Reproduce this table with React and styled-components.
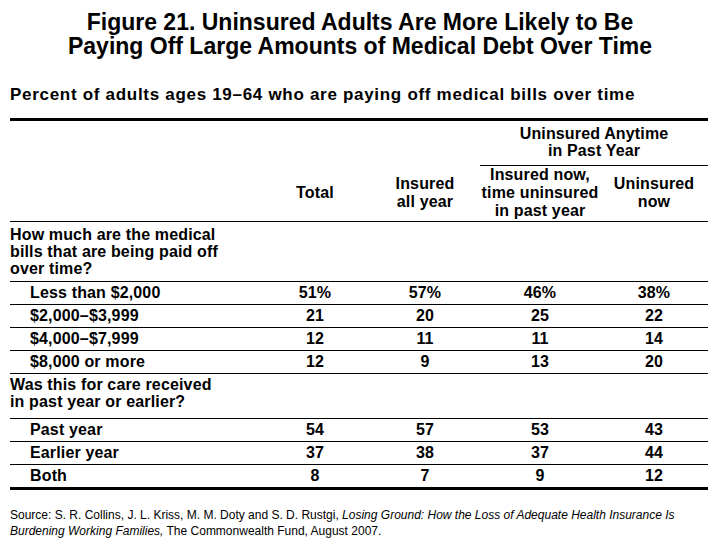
import React from "react";
import styled, { createGlobalStyle } from "styled-components";

const GlobalStyle = createGlobalStyle`
  html, body {
    margin: 0;
    padding: 0;
    background: #fff;
  }
  body {
    font-family: "Liberation Sans", Arial, sans-serif;
    color: #000;
  }
`;

const Page = styled.div`
  width: 720px;
  height: 540px;
  box-sizing: border-box;
  padding: 10px 12px 0 10px;
  overflow: hidden;
`;

const Title = styled.h1`
  margin: 0;
  font-size: 23px;
  line-height: 24px;
  font-weight: 700;
  text-align: center;
  padding-left: 2px;
`;

const Subtitle = styled.h2`
  margin: 28px 0 0;
  font-size: 17px;
  line-height: 18px;
  font-weight: 700;
  letter-spacing: 0.7px;
`;

const Table = styled.div`
  margin-top: 14px;
  width: 698px;
  border-top: 3px solid #000;
  border-bottom: 3px solid #000;
  font-size: 16px;
  font-weight: 700;
  letter-spacing: 0.15px;
`;

const Row = styled.div`
  display: grid;
  grid-template-columns: 250px 110px 110px 120px 108px;
  border-bottom: ${(p) => (p.last ? "none" : "1px solid #000")};
  height: ${(p) => (p.data ? "22px" : "auto")};
  align-items: center;
`;

const GroupRow = styled(Row)`
  border-bottom: none;
`;

const GroupCell = styled.div`
  grid-column: 4 / 6;
  text-align: center;
  line-height: 17px;
  padding: 4px 0 6px;
  border-bottom: 1px solid #000;
`;

const HeadCell = styled.div`
  text-align: center;
  line-height: 18px;
  padding: 0 0 1px;
`;

const Section = styled.div`
  grid-column: 1 / 6;
  line-height: 17px;
  padding: ${(p) => p.pad};
`;

const Label = styled.div`
  padding-left: 20px;
`;

const Value = styled.div`
  text-align: center;
`;

const Source = styled.p`
  margin: 17px 0 0;
  font-size: 12px;
  line-height: 16px;
  font-weight: 400;
  em {
    font-style: italic;
  }
`;

const amounts = [
  ["Less than $2,000", "51%", "57%", "46%", "38%"],
  ["$2,000–$3,999", "21", "20", "25", "22"],
  ["$4,000–$7,999", "12", "11", "11", "14"],
  ["$8,000 or more", "12", "9", "13", "20"],
];

const timing = [
  ["Past year", "54", "57", "53", "43"],
  ["Earlier year", "37", "38", "37", "44"],
  ["Both", "8", "7", "9", "12"],
];

const DataRow = ({ cells, last }) => (
  <Row data last={last}>
    <Label>{cells[0]}</Label>
    {cells.slice(1).map((v, i) => (
      <Value key={i}>{v}</Value>
    ))}
  </Row>
);

export default function App() {
  return (
    <Page>
      <GlobalStyle />
      <Title>
        Figure 21. Uninsured Adults Are More Likely to Be
        <br />
        Paying Off Large Amounts of Medical Debt Over Time
      </Title>
      <Subtitle>
        Percent of adults ages 19–64 who are paying off medical bills over time
      </Subtitle>
      <Table>
        <GroupRow>
          <GroupCell>
            Uninsured Anytime
            <br />
            in Past Year
          </GroupCell>
        </GroupRow>
        <Row>
          <div />
          <HeadCell>Total</HeadCell>
          <HeadCell>
            Insured
            <br />
            all year
          </HeadCell>
          <HeadCell>
            Insured now,
            <br />
            time uninsured
            <br />
            in past year
          </HeadCell>
          <HeadCell>
            Uninsured
            <br />
            now
          </HeadCell>
        </Row>
        <Row>
          <Section pad="4px 0 4px">
            How much are the medical
            <br />
            bills that are being paid off
            <br />
            over time?
          </Section>
        </Row>
        {amounts.map((r) => (
          <DataRow key={r[0]} cells={r} />
        ))}
        <Row>
          <Section pad="2px 0 8px">
            Was this for care received
            <br />
            in past year or earlier?
          </Section>
        </Row>
        {timing.map((r, i) => (
          <DataRow key={r[0]} cells={r} last={i === timing.length - 1} />
        ))}
      </Table>
      <Source>
        Source: S. R. Collins, J. L. Kriss, M. M. Doty and S. D. Rustgi,{" "}
        <em>Losing Ground: How the Loss of Adequate Health Insurance Is</em>
        <br />
        <em>Burdening Working Families,</em> The Commonwealth Fund, August
        2007.
      </Source>
    </Page>
  );
}
